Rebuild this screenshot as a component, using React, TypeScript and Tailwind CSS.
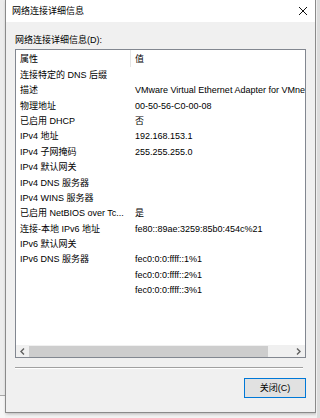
import React from 'react';

type Row = { name: string; value?: string };

const rows: Row[] = [
  { name: '连接特定的 DNS 后缀' },
  { name: '描述', value: 'VMware Virtual Ethernet Adapter for VMnet8' },
  { name: '物理地址', value: '00-50-56-C0-00-08' },
  { name: '已启用 DHCP', value: '否' },
  { name: 'IPv4 地址', value: '192.168.153.1' },
  { name: 'IPv4 子网掩码', value: '255.255.255.0' },
  { name: 'IPv4 默认网关' },
  { name: 'IPv4 DNS 服务器' },
  { name: 'IPv4 WINS 服务器' },
  { name: '已启用 NetBIOS over Tc...', value: '是' },
  { name: '连接-本地 IPv6 地址', value: 'fe80::89ae:3259:85b0:454c%21' },
  { name: 'IPv6 默认网关' },
  { name: 'IPv6 DNS 服务器', value: 'fec0:0:0:ffff::1%1' },
  { name: '', value: 'fec0:0:0:ffff::2%1' },
  { name: '', value: 'fec0:0:0:ffff::3%1' },
];

const font = "font-['Liberation_Sans','Noto_Sans_CJK_SC',sans-serif]";

const App: React.FC = () => {
  return (
    <div className={`flex w-[320px] h-[418px] overflow-hidden bg-[#f3f3f3] text-[9px] text-black ${font}`}>
      {/* window behind, left edge */}
      <div className="flex flex-col w-[5px]">
        <div className="h-[396px] bg-[#ececec] border-b border-[#a8a8a8]" />
        <div className="flex-1 bg-[#f6f6f6]" />
      </div>

      {/* Dialog */}
      <div className="flex flex-col w-[311px] h-[413px] border-x border-b border-[#8a8a8a] bg-[#f0f0f0] shadow-[1px_1px_3px_rgba(0,0,0,0.25)]">
        {/* Title bar */}
        <div className="flex items-center justify-between h-[22px] bg-white pl-[6px] pr-[7px]">
          <span className="leading-none">网络连接详细信息</span>
          <svg width="10" height="10" viewBox="0 0 10 10">
            <path d="M1 1 L9 9 M9 1 L1 9" stroke="#111" strokeWidth="1" fill="none" />
          </svg>
        </div>

        {/* Body */}
        <div className="flex flex-col flex-1 px-[9px] pt-[11px]">
          <div className="h-[14px] leading-[14px]">网络连接详细信息(D):</div>

          {/* List view */}
          <div className="mt-[2px] flex flex-col h-[309px] border border-[#828790] bg-white">
            <div className="flex h-[18px]">
              <div className="w-[114px] pl-[4px] leading-[18px]">属性</div>
              <div className="w-px h-[17px] bg-[#e5e5e5]" />
              <div className="pl-[4px] leading-[18px]">值</div>
            </div>

            <div className="flex flex-col flex-1">
              {rows.map((r, i) => (
                <div key={i} className="flex h-[15.36px] leading-[15.36px] whitespace-nowrap">
                  <div className="w-[115px] pl-[4px] overflow-hidden">{r.name}</div>
                  <div className="flex-1 pl-[4px] overflow-hidden">{r.value}</div>
                </div>
              ))}
            </div>

            {/* Horizontal scrollbar */}
            <div className="flex items-center h-[12px] bg-[#f0f0f0]">
              <div className="flex items-center justify-center w-[13px] h-full">
                <svg width="5" height="7" viewBox="0 0 5 7">
                  <path d="M4 0.5 L1 3.5 L4 6.5" stroke="#606060" strokeWidth="1.4" fill="none" />
                </svg>
              </div>
              <div className="w-[239px] h-[11px] bg-[#cdcdcd]" />
              <div className="flex-1" />
              <div className="flex items-center justify-center w-[13px] h-full">
                <svg width="5" height="7" viewBox="0 0 5 7">
                  <path d="M1 0.5 L4 3.5 L1 6.5" stroke="#606060" strokeWidth="1.4" fill="none" />
                </svg>
              </div>
            </div>
          </div>

          {/* Separator */}
          <div className="mt-[9px] w-[288px] h-[2px] border-t border-[#a0a0a0] border-b border-b-white" />

          {/* Button row */}
          <div className="flex justify-end mt-[9px]">
            <button className="w-[62px] h-[20px] border border-[#0078d7] bg-[#e1e1e1] leading-none text-[9px]">
              关闭(C)
            </button>
          </div>
        </div>
      </div>

      {/* window behind, right edge */}
      <div className="flex-1 bg-[#dcdcdc] border-l border-[#f0f0f0]" />
    </div>
  );
};

export default App;
